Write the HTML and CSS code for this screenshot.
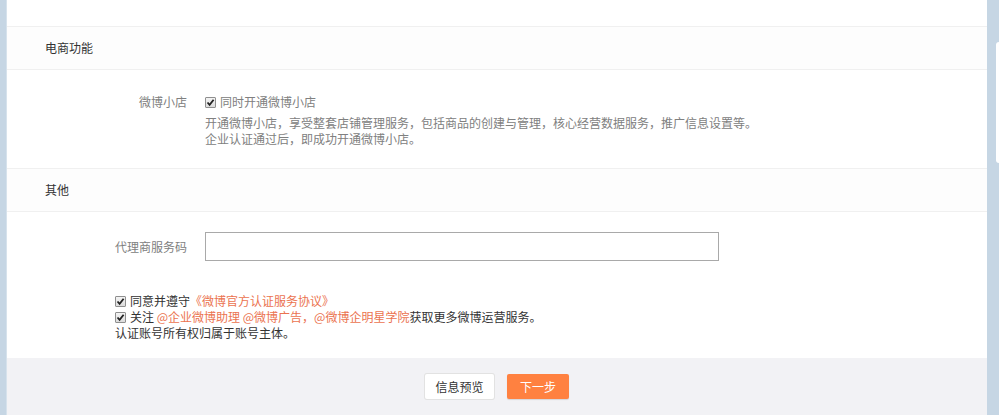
FILE: index.html
```html
<!DOCTYPE html>
<html lang="zh-CN">
<head>
    <meta charset="UTF-8">
    <title>企业认证 - 填写资料</title>
    <link rel="stylesheet" href="styles.css">
</head>
<body>
    <div class="page">
        <div class="side-left"></div>

        <div class="panel">
            <div class="top-gap"></div>

            <div class="sec-title">电商功能</div>
            <div class="form-row shop-row">
                <div class="label">微博小店</div>
                <div class="field">
                    <div class="check-line"><span class="check"><svg viewBox="0 0 11 11" width="11" height="11"><path d="M2.5 5.5 L4.6 7.8 L8.6 2.8" fill="none" stroke="#222" stroke-width="1.8"/></svg></span>同时开通微博小店</div>
                    <p class="desc">开通微博小店，享受整套店铺管理服务，包括商品的创建与管理，核心经营数据服务，推广信息设置等。<br>企业认证通过后，即成功开通微博小店。</p>
                </div>
            </div>

            <div class="sec-title">其他</div>
            <div class="form-row other-row">
                <div class="agent">
                    <div class="label">代理商服务码</div>
                    <div class="field"><input type="text" class="text-input"></div>
                </div>
                <div class="agree">
                    <div class="check-line"><span class="check"><svg viewBox="0 0 11 11" width="11" height="11"><path d="M2.5 5.5 L4.6 7.8 L8.6 2.8" fill="none" stroke="#222" stroke-width="1.8"/></svg></span>同意并遵守<a href="#" class="link">《微博官方认证服务协议》</a></div>
                    <div class="check-line"><span class="check"><svg viewBox="0 0 11 11" width="11" height="11"><path d="M2.5 5.5 L4.6 7.8 L8.6 2.8" fill="none" stroke="#222" stroke-width="1.8"/></svg></span>关注 <a href="#" class="link">@企业微博助理</a> <a href="#" class="link">@微博广告，@微博企明星学院</a>获取更多微博运营服务。</div>
                    <div class="plain-line">认证账号所有权归属于账号主体。</div>
                </div>
            </div>

            <div class="footer">
                <button class="btn btn-light">信息预览</button>
                <button class="btn btn-orange">下一步</button>
            </div>
        </div>

        <div class="side-right">
            <div class="side-card"></div>
        </div>
    </div>
</body>
</html>
```

FILE: styles.css
```css
body {
    margin: 0;
    padding: 0;
    font-family: "Noto Sans CJK SC", "Liberation Sans", sans-serif;
    font-size: 12px;
    color: #333;
    background: #c6d6e4;
}
.page {
    display: flex;
    height: 415px;
    overflow: hidden;
}
.side-left {
    width: 7px;
    background: #c6d6e4;
    box-shadow: inset -1px 0 0 #d6e2ec;
}
.panel {
    width: 980px;
    background: #fff;
    display: flex;
    flex-direction: column;
}
.top-gap {
    height: 26px;
    border-bottom: 1px solid #f0f0f0;
}
.sec-title {
    height: 42px;
    line-height: 42px;
    padding-left: 38px;
    color: #333;
    background: #fdfdfd;
    border-bottom: 1px solid #f0f0f0;
}
.form-row {
    border-bottom: 1px solid #f0f0f0;
}
.shop-row {
    display: flex;
    padding: 23px 0 21px;
}
.label {
    width: 198px;
    padding-right: 18px;
    box-sizing: border-box;
    text-align: right;
    color: #808080;
    line-height: 18px;
}
.field {
    flex: 1;
    color: #808080;
}
.check-line {
    line-height: 16px;
    white-space: nowrap;
}
.shop-row .check-line {
    line-height: 18px;
}
.check {
    display: inline-block;
    vertical-align: -1px;
    width: 11px;
    height: 11px;
    margin-right: 4px;
    border: 1px solid #8f8f8f;
    border-radius: 1px;
    background: linear-gradient(#f4f4f4, #dcdcdc);
    box-sizing: border-box;
    overflow: hidden;
    position: relative;
}
.check svg {
    position: absolute;
    left: -1px;
    top: -1px;
}
.desc {
    margin: 4px 0 0;
    line-height: 16px;
}
.other-row {
    padding: 20px 0 17px;
    border-bottom: none;
}
.agent {
    display: flex;
    align-items: center;
}
.agent .label {
    line-height: 29px;
}
.text-input {
    width: 514px;
    height: 29px;
    box-sizing: border-box;
    border: 1px solid #a9a9a9;
    outline: none;
    padding: 0 6px;
    font-family: inherit;
    font-size: 12px;
}
.agree {
    margin: 32px 0 0 108px;
    color: #333;
}
.plain-line {
    line-height: 16px;
}
.link {
    color: #eb7350;
    text-decoration: none;
}
.footer {
    flex: 1;
    background: #f2f2f5;
    display: flex;
    justify-content: center;
    align-items: flex-start;
    padding-top: 16px;
}
.btn {
    height: 25px;
    border: none;
    border-radius: 2px;
    font-family: inherit;
    font-size: 12px;
    cursor: pointer;
    padding: 0;
}
.btn-light {
    width: 69px;
    background: #fff;
    color: #333;
    box-shadow: 0 0 0 1px #e2e2e2;
}
.btn-orange {
    width: 62px;
    margin-left: 13px;
    background: #ff8140;
    color: #fff;
    box-shadow: 0 1px 1px rgba(0, 0, 0, 0.12);
}
.side-right {
    width: 12px;
    background: #c6d6e4;
}
.side-card {
    margin: 42px 0 0 9px;
    height: 121px;
    background: #fff;
    border-radius: 3px 0 0 3px;
}
```
